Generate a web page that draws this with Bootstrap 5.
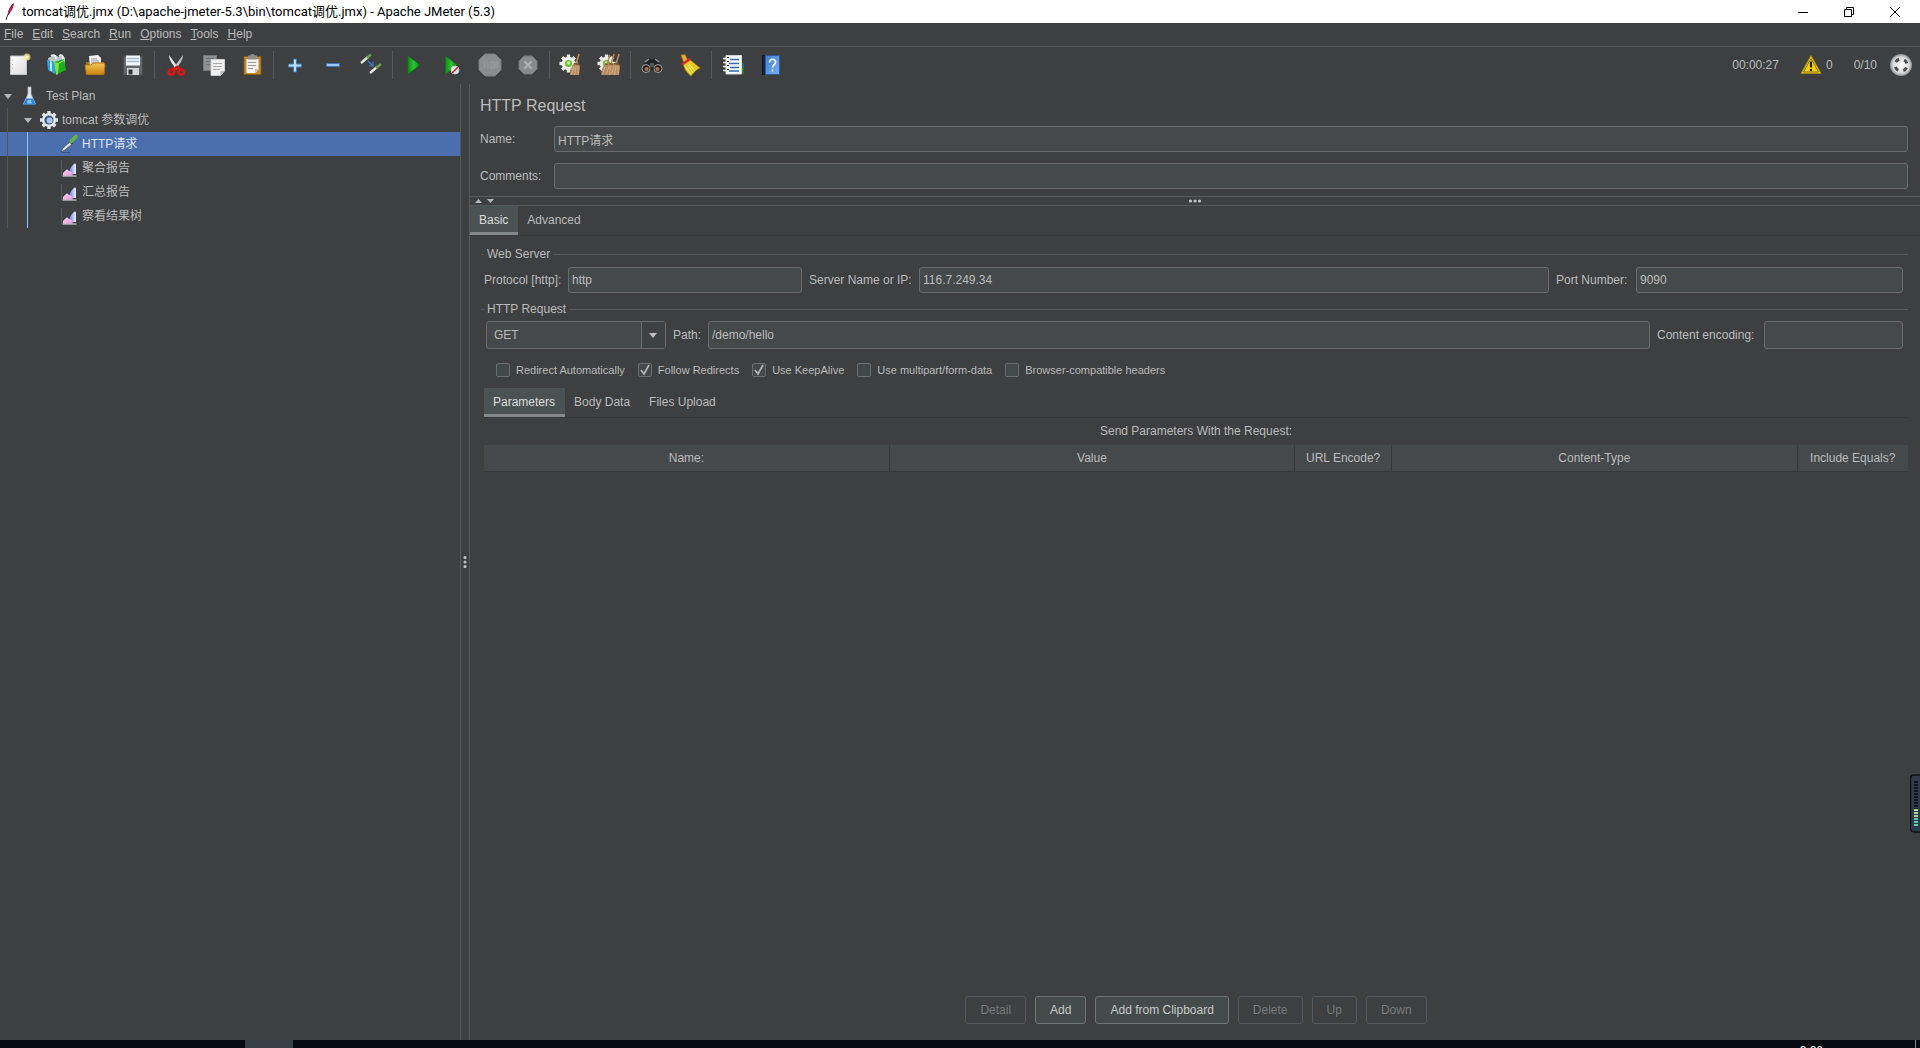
<!DOCTYPE html>
<html lang="en">
<head>
<meta charset="utf-8">
<meta name="viewport" content="width=device-width, initial-scale=1">
<title>Apache JMeter (5.3)</title>
<link href="https://cdn.jsdelivr.net/npm/bootstrap@5.3.0/dist/css/bootstrap.min.css" rel="stylesheet">
<style>
  :root { --jm-bg:#3d3f41; --jm-line:#56595a; --jm-edge:#696c6d; --jm-field:#45494a; --jm-text:#bbbbbb; }
  body { font-family:"Liberation Sans","Noto Sans CJK SC",sans-serif; font-size:12px; line-height:16px; color:var(--jm-text); background:var(--jm-bg); }
  .shell { height:100vh; overflow:hidden; }
  .titlebar { height:23px; background:#fff; color:#000; font-family:Roboto,"Noto Sans CJK SC",sans-serif; font-size:13px; padding:0 2px 0 4px; }
  .titlebar button { width:46px; height:23px; border:0; background:none; padding:0; display:flex; align-items:center; justify-content:center; }
  .menubar { height:24px; border-bottom:1px solid var(--jm-line); padding:0 0 2px 4px; gap:9px; }
  .menubar a { color:var(--jm-text); text-decoration:none; }
  .toolbar { height:37px; padding-bottom:2px; }
  .toolbar button { width:38px; height:35px; border:0; background:none; padding:0; display:flex; align-items:center; justify-content:center; }
  .sep { width:1px; height:28px; background:#55585a; margin:0 2px; }
  .status { padding-right:7px; }
  .elapsed { margin-right:20px; } .warn { margin-right:3px; } .warn-count { margin-right:21px; } .threads { margin-right:12px; }
  .work { min-height:0; }
  .tree { width:461px; border-right:1px solid var(--jm-line); }
  .tree-row { height:24px; display:flex; align-items:center; }
  .tree-row svg { flex:none; }
  .lvl-1 { padding-left:4px; } .lvl-2 { padding-left:24px; } .lvl-3 { padding-left:60px; gap:4px; }
  .tree-row.picked { background:#4b6eaf; color:#dfe6f2; }
  .guide { position:absolute; width:1px; bottom:0; background:#54575a; }
  .guide-a { left:7px; top:24px; } .guide-b { left:27px; top:48px; background:#8ec4f8; }
  .grip { width:8px; }
  .main { border-left:1px solid var(--jm-line); min-width:0; }
  .head { padding:12px 12px 7px 10px; }
  .head h1 { font-size:16px; line-height:20px; margin:0 0 10px; font-weight:400; }
  .head label { width:74px; }
  .head-rows { gap:11px; }
  .field { height:26px; background:var(--jm-field); border:1px solid var(--jm-edge); border-radius:3px; color:var(--jm-text); padding:0 3px; min-width:0; font:inherit; outline:0; }
  .tall { height:28px; }
  .splitbar { height:10px; border:1px solid var(--jm-line); border-width:1px 0; display:grid; grid-template-columns:1fr auto 1fr; align-items:center; }
  .arrows { margin-left:5px; }
  .tabs { border-bottom:1px solid #353738; }
  .tabs button { height:29px; border:0; border-bottom:3px solid transparent; background:none; color:var(--jm-text); padding:2px 10px 0 9px; }
  .tabs button.active { background:#4b5253; border-bottom-color:#84888a; color:#dcdcdc; }
  .group-title { display:flex; align-items:center; gap:3px; line-height:16px; }
  .group-title::before { content:""; width:3px; height:1px; background:var(--jm-line); }
  .group-title::after { content:""; flex:1; height:1px; background:var(--jm-line); }
  .body-area { padding:10px 12px 16px 11px; }
  .server-row { padding:5px 5px 8px 3px; }
  .path-row { padding:4px 5px 0 5px; }
  .w-pr { width:84px; } .f-pr { width:234px; margin-right:7px; }
  .w-sv { width:110px; } .w-pt { width:80px; margin-left:7px; } .f-pt { width:267px; }
  .w-pa { width:35px; margin-left:7px; } .w-ce { width:107px; margin-left:7px; } .f-ce { width:139px; }
  .method-box { position:relative; width:180px; }
  .method-box select { width:100%; appearance:none; padding-left:7px; display:block; }
  .method-box svg { position:absolute; right:1px; top:1px; pointer-events:none; }
  .checks { height:39px; padding:3px 0 0 15px; font-size:11px; gap:13px; }
  .checks label { display:flex; align-items:center; gap:6px; }
  .checks input { appearance:none; margin:0; width:14px; height:14px; border:1px solid #6b6e6f; border-radius:2px; background:#43494a; }
  .checks input:checked { background:#43494a url("data:image/svg+xml,%3Csvg xmlns='http://www.w3.org/2000/svg' viewBox='0 0 12 12'%3E%3Cpath d='M2 6l3 4 5-9' fill='none' stroke='%23b4b6b6' stroke-width='1.7'/%3E%3C/svg%3E"); }
  .inner { margin-left:3px; }
  .caption-line { padding:5px 0 6px; }
  .params { width:100%; table-layout:fixed; }
  .params th { height:26px; font-weight:400; text-align:center; background:#46494b; border-right:1px solid #353839; border-bottom:1px solid #36393a; padding:0; }
  .params th:last-child { border-right:0; }
  .c-url { width:97px; } .c-eq { width:111px; }
  .actions { gap:9px; }
  .actions .btn { --bs-btn-font-size:12px; --bs-btn-line-height:16px; --bs-btn-padding-y:5px; --bs-btn-padding-x:14px; --bs-btn-border-radius:3px; --bs-btn-color:#c8c8c8; --bs-btn-bg:#454b4b; --bs-btn-border-color:#707474; --bs-btn-disabled-color:#77797a; --bs-btn-disabled-bg:transparent; --bs-btn-disabled-border-color:#55585a; --bs-btn-disabled-opacity:1; }
  .taskbar { height:8px; background:#060a10; position:relative; overflow:hidden; padding:0 4px 0 245px; }
  .task { width:48px; height:8px; background:#394045; }
  .desk-edge { width:1px; height:8px; background:#85888b; }
  .clock { position:absolute; right:97px; top:3px; color:#fff; }
  .meter { position:absolute; right:0; top:774px; }
</style>
<script src="https://cdn.jsdelivr.net/npm/bootstrap@5.3.0/dist/js/bootstrap.bundle.min.js"></script>
</head>
<body>
<svg width="0" height="0" class="position-absolute" aria-hidden="true">
  <defs>
    <linearGradient id="gGreen" x2="1" y2="0"><stop stop-color="#0a8f14"/><stop offset=".5" stop-color="#2fc436"/><stop offset="1" stop-color="#0b8a12"/></linearGradient>
    <linearGradient id="gGold" x2="0" y2="1"><stop stop-color="#f3c65a"/><stop offset="1" stop-color="#c98609"/></linearGradient>
    <linearGradient id="gPaper" x2="1" y2="1"><stop stop-color="#fff"/><stop offset="1" stop-color="#dcdcdc"/></linearGradient>
    <linearGradient id="gBook" x2="1" y2="1"><stop stop-color="#3f7fd0"/><stop offset="1" stop-color="#78b0f0"/></linearGradient>
    <linearGradient id="gPink" x2="1" y2="1"><stop stop-color="#ffd9f6"/><stop offset="1" stop-color="#ee8fdc"/></linearGradient>
    <linearGradient id="gBlue" x2="1" y2="0"><stop stop-color="#7583e2"/><stop offset="1" stop-color="#eef3ff"/></linearGradient>
    <radialGradient id="gBall"><stop stop-color="#fff"/><stop offset=".75" stop-color="#d8d8d8"/><stop offset="1" stop-color="#8c8c8c"/></radialGradient>
    <symbol id="report" viewBox="0 0 18 20">
      <path d="M1.500 2v16" stroke="#5b5d60"/>
      <path d="M9.500 13c1-3 2.500-6 5-7.500 1 0 1.500.5 1.500 2V16h-5z" fill="url(#gBlue)"/>
      <path d="M3 17.500V15l3.500-3.500c1-.5 2 1 3 1.500 1.500.5 2.500 1.500 3.500 4.500z" fill="url(#gPink)"/>
      <path d="M2.500 18h14" stroke="#f2f2f6"/>
    </symbol>
    <symbol id="gearwheel" viewBox="0 0 24 24">
      <g transform="translate(9.500 10.500)"><path d="M0-9V9M-9 0H9M-6.300-6.300L6.300 6.300M6.300-6.300L-6.300 6.300" stroke="#e8ebe4" stroke-width="3.400"/><circle r="6.800" fill="#eef0ea"/><circle r="3.600" fill="#6fba35"/><circle r="1.800" cy="-.5" fill="#c6efa8"/></g>
    </symbol>
    <symbol id="broomhead" viewBox="0 0 12 24">
      <path d="M10 1L7 11" stroke="#b98a58" stroke-width="1.600"/><path d="M5 10l5 1 1 3-1 8H1c0-4 1.500-9 4-12z" fill="#b48a60"/><path d="M5 13l-2.500 8M7 13l-1.500 9M9 13v8" stroke="#dcbc92" stroke-width=".8"/><path d="M5 10.500l5 1" stroke="#7d5630" stroke-width="1.500"/>
    </symbol>
  </defs>
</svg>

<div class="shell d-flex flex-column">
  <header class="titlebar d-flex align-items-center flex-shrink-0">
    <svg width="14" height="20" viewBox="0 0 14 20"><path d="M10 1C6 4 4 9 3.500 14L6 11C8 8 10 5 10 1z" fill="#c22036"/><path d="M9 2C6.500 5 5 8 4 13" stroke="#7a1c60" fill="none"/><path d="M3.600 13L2 18" stroke="#333"/></svg>
    <span class="ms-1 flex-grow-1">tomcat调优.jmx (D:\apache-jmeter-5.3\bin\tomcat调优.jmx) - Apache JMeter (5.3)</span>
    <button aria-label="Minimize"><svg width="12" height="12"><path d="M1 6.500h10" stroke="#000"/></svg></button>
    <button aria-label="Restore"><svg width="12" height="12" fill="none" stroke="#000"><path d="M1.500 3.500h7v7h-7zM3.500 3V1.500h7v7H9"/></svg></button>
    <button aria-label="Close"><svg width="12" height="12"><path d="M1 1l10 10M11 1L1 11" stroke="#000"/></svg></button>
  </header>

  <nav class="menubar d-flex align-items-center flex-shrink-0">
    <a href="#"><u>F</u>ile</a><a href="#"><u>E</u>dit</a><a href="#"><u>S</u>earch</a><a href="#"><u>R</u>un</a><a href="#"><u>O</u>ptions</a><a href="#"><u>T</u>ools</a><a href="#"><u>H</u>elp</a>
  </nav>

  <div class="toolbar d-flex align-items-center flex-shrink-0">
    <button aria-label="New"><svg width="24" height="24"><path d="M3.500 3h16v18.500h-16z" fill="url(#gPaper)" stroke="#c4c4c4"/><path d="M5.500 7v1m0 3v1m0 3v1" stroke="#bbb"/><circle cx="20" cy="4" r="3.500" fill="#f4ee8b" opacity=".75"/><circle cx="20" cy="4" r="1.700" fill="#fffbc8"/></svg></button>
    <button aria-label="Templates"><svg width="24" height="24"><path d="M3 5l7-3 4 2 3-2 3 3v6H4z" fill="#b9c3c9"/><path d="M6 3c3-2 5 0 5 3M14 3c3-2 5 1 4 4" fill="none" stroke="#eef3f6" stroke-width="2"/><path d="M2 7l8 2v12l-7-4z" fill="#2ba3e0"/><path d="M5 8l2 .500v10l-2-1z" fill="#bfe8fb"/><path d="M9 9l10-3 2 11-10 5z" fill="#1fae1b"/><path d="M9 9l5 1-1 11-2 1z" fill="#7fe052"/><path d="M14 10l6-3" stroke="#baf59c"/></svg></button>
    <button aria-label="Open"><svg width="24" height="24"><path d="M3 9h18v12H3z" fill="#a86f0c"/><path d="M6 3l9-1 3 3v10H7z" fill="#f5f5f5"/><path d="M8 6h6M8 8h8M8 10h8" stroke="#999"/><path d="M2 12h6l2-2h11l1 2-1 9.500H3.500z" fill="url(#gGold)" stroke="#b47a10"/></svg></button>
    <button aria-label="Save"><svg width="24" height="24"><path d="M2.500 3h18l1 1v18h-19z" fill="#63676a" stroke="#4a4d4f"/><path d="M5 2.500h14v10H5z" fill="#f4f8fb"/><path d="M6 5.500h12M6 8.500h12" stroke="#a3bdd0" stroke-width="1.500"/><path d="M6 15h12v7H6z" fill="#d5d5d5"/><path d="M7.500 16.500h4v5h-4z" fill="#33373a"/></svg></button>
    <span class="sep"></span>
    <button aria-label="Cut"><svg width="24" height="24"><path d="M5 2l9.500 13-2 1.500C9 12 5 7 5 2z" fill="#e9ebeb"/><path d="M19 2l-9.500 13 2 1.500C15 12 19 7 19 2z" fill="#c5c9ca"/><g fill="none" stroke="#dc1515" stroke-width="2.600"><ellipse cx="7.500" cy="19" rx="3" ry="2.500" transform="rotate(-30 7.500 19)"/><ellipse cx="17" cy="19" rx="3" ry="2.500" transform="rotate(30 17 19)"/><path d="M9 17l4-3 3 3"/></g></svg></button>
    <button aria-label="Copy"><svg width="24" height="24"><path d="M1.500 2.500h13v15h-13z" fill="#8f9192" stroke="#777"/><path d="M4 5.500h8M4 8.500h6M4 11.500h5" stroke="#686a6b"/><path d="M9 6.500h13.500V18l-4 4.500H9z" fill="#efefef" stroke="#cfcfcf"/><path d="M11 10.500h9M11 13.500h9M11 16.500h7" stroke="#aaa"/><path d="M18.500 22.500V18h4z" fill="#b8b8b8"/></svg></button>
    <button aria-label="Paste"><svg width="24" height="24"><path d="M4 3.500h17v18H4z" fill="#c08a30" stroke="#8a5c12"/><path d="M6.500 6h12v10.500l-3 3.500h-9z" fill="#f5f3ec"/><path d="M8 2.500h2c1-2 4-2 5 0h2v4H8z" fill="#8d8f8c"/><path d="M8 9.500h8M8 12.500h8M8 15.500h5" stroke="#999"/><path d="M15 20v-4h4z" fill="#c9c5b8"/></svg></button>
    <span class="sep"></span>
    <button aria-label="Expand"><svg width="24" height="24"><path d="M10.500 6h3v5h5v3h-5v5h-3v-5h-5v-3h5z" fill="#b8d9f8" stroke="#3b78bd"/></svg></button>
    <button aria-label="Collapse"><svg width="24" height="24"><path d="M5.500 10.500h13v3h-13z" fill="#9cc6f0" stroke="#3b78bd"/></svg></button>
    <button aria-label="Toggle"><svg width="24" height="24"><path d="M2 10l7-6M11 20l7-6" stroke="#e4e6e2" stroke-width="2.400"/><path d="M8 5l4-3.500M17 15l5-4" stroke="#6aa04f" stroke-width="2.400"/><path d="M9 8l4 4m1-3v4h-4" fill="none" stroke="#3b7fd6" stroke-width="1.200"/></svg></button>
    <span class="sep"></span>
    <button aria-label="Start"><svg width="24" height="24"><path d="M6 3l12 9-12 9z" fill="url(#gGreen)" stroke="#0a7a12" stroke-width=".6"/></svg></button>
    <button aria-label="Start no pauses"><svg width="24" height="24"><path d="M5.500 3L17 12 5.500 21z" fill="url(#gGreen)" stroke="#0a7a12" stroke-width=".6"/><circle cx="15" cy="17" r="4" fill="#f2f2f2" stroke="#b9c6d2"/><path d="M12 20l6-6" stroke="#e02424" stroke-width="1.700"/></svg></button>
    <button aria-label="Stop"><svg width="24" height="24"><path d="M7 1h10l6 6v10l-6 6H7l-6-6V7z" fill="#8b8d8e" stroke="#7a7c7d"/><path d="M5 9h3M6.500 9v6M10 9v6M13 9h3v6h-3zM18 9v6m0-6h2v3h-2" stroke="#999b9c" fill="none"/></svg></button>
    <button aria-label="Shutdown"><svg width="24" height="24"><path d="M8 3h8l5 5v8l-5 5H8l-5-5V8z" fill="#898b8c" stroke="#777"/><path d="M8.500 8.500l7 7m0-7l-7 7" stroke="#b0b2b3" stroke-width="2"/></svg></button>
    <span class="sep"></span>
    <button aria-label="Clear"><svg width="24" height="24"><use href="#gearwheel" width="24" height="24"/><use href="#broomhead" x="10" width="12" height="24"/></svg></button>
    <button aria-label="Clear all"><svg width="24" height="24"><use href="#gearwheel" width="24" height="24"/><use href="#broomhead" x="3" y="1" width="12" height="23"/><use href="#broomhead" x="7" width="12" height="24"/><use href="#broomhead" x="12" width="12" height="24"/></svg></button>
    <span class="sep"></span>
    <button aria-label="Search"><svg width="24" height="24"><path d="M5 9l4-4 3 2 3-2 4 4 3 8H2z" fill="#202224"/><path d="M5 9l4-3M19 9l-4-3" stroke="#909396" stroke-width="1.500"/><circle cx="6" cy="15.500" r="4" fill="#2a2320" stroke="#a0a3a5"/><circle cx="18" cy="15.500" r="4" fill="#2a2320" stroke="#a0a3a5"/><circle cx="6.500" cy="16" r="2" fill="#a8704a"/><circle cx="17.500" cy="16" r="2" fill="#a8704a"/><path d="M10 10h4v4h-4z" fill="#55585a"/></svg></button>
    <button aria-label="Reset search"><svg width="24" height="24"><path d="M3 2l4-.5 3 6-4 3z" fill="#eda634" stroke="#a46b13" stroke-width=".7"/><path d="M5 10l6-4 11 9c-4 2-6 4-9 8C8 19 6 15 5 10z" fill="#e9c824" stroke="#a88a0e" stroke-width=".7"/><path d="M7 13l6 8M11 11l6 7M10 12l5 8" stroke="#fff27a"/><path d="M4 11.500L12 6" stroke="#d32a1f" stroke-width="2.500"/></svg></button>
    <span class="sep"></span>
    <button aria-label="Function helper"><svg width="24" height="24"><path d="M18 10h4.500v11H18z" fill="#2e8f3a"/><path d="M19 10h3.500v4H19z" fill="#2a62ba"/><path d="M5 2.500h15.500V21H5z" fill="#fdfdfd" stroke="#d5d5d5"/><path d="M9 6.500h9M8 10.500h10M9 14.500h9M8 18h10" stroke="#2e69b5" stroke-width="1.400"/><path d="M2 5.500h5M2 9.500h5M2 13.500h5M2 17.500h5" stroke="#fff" stroke-width="1.600"/><path d="M6 4.500h2M6 8.500h2M6 12.500h2M6 16.500h2" stroke="#222"/></svg></button>
    <button aria-label="Help"><svg width="24" height="24"><path d="M3.500 2.500h4v19h-4z" fill="#17253d" stroke="#0e1727"/><path d="M6.500 2.500h14v19h-14z" fill="url(#gBook)" stroke="#2c5a9a"/><path d="M10.500 9.500c0-4.500 6.500-4 6 0-.4 2.500-3 2.200-3 5M13.500 16.500v2" fill="none" stroke="#fff" stroke-width="1.600"/></svg></button>
    <div class="status d-flex align-items-center ms-auto">
      <span class="elapsed">00:00:27</span>
      <svg class="warn" width="24" height="24"><path d="M12 2.500L22 20.500H2z" fill="#f6cf12" stroke="#a98b0a" stroke-linejoin="round"/><path d="M12 5.500L19.500 19h-15z" fill="none" stroke="#5b4c05" stroke-width=".7"/><path d="M12 8.500v6" stroke="#222" stroke-width="2.200"/><circle cx="12" cy="17" r="1.200" fill="#222"/></svg>
      <span class="warn-count">0</span>
      <span class="threads">0/10</span>
      <svg width="24" height="24"><circle cx="12" cy="12" r="11" fill="url(#gBall)"/><circle cx="12" cy="12" r="6" fill="none" stroke="#4c4e50" stroke-width="3" stroke-dasharray="4.200 5.225" stroke-dashoffset="-2.600"/></svg>
    </div>
  </div>

  <div class="work d-flex flex-grow-1">
    <aside class="tree flex-shrink-0">
      <div class="position-relative">
        <div class="tree-row lvl-1">
          <svg width="8" height="5"><path d="M0 0h8L4 5z" fill="#b4b6b7"/></svg>
          <svg class="ms-2" width="18" height="20"><path d="M8 1v7L3.500 18h12L11 8V1z" fill="#dfe9f2" stroke="#aeb7bd" stroke-width=".8"/><path d="M6 12.500h7l2.500 6h-12z" fill="#2f86e0"/><path d="M8 14l-1 3.500h5L11 14z" fill="#8cc4f8"/></svg>
          <span class="ms-1 ps-1">Test Plan</span>
        </div>
        <div class="tree-row lvl-2">
          <svg width="8" height="5"><path d="M0 0h8L4 5z" fill="#b4b6b7"/></svg>
          <svg class="ms-2" width="18" height="20" viewBox="0 0 18 20"><g transform="translate(9 10)"><path d="M0-9V9M-9 0H9M-6.300-6.300L6.300 6.300M6.300-6.300L-6.300 6.300" stroke="#e4e6e8" stroke-width="3.400"/><circle r="7" fill="#e4e6e8"/><circle r="4.600" fill="#3a5c88"/><circle r="3" cx=".6" cy=".6" fill="#a9c8e6"/></g></svg>
          <span class="ms-1">tomcat 参数调优</span>
        </div>
        <div class="tree-row lvl-3 picked"><svg width="18" height="20"><path d="M1 18l2-4 7-6 2 2-7 6z" fill="#e5e8e4" stroke="#4a4f48" stroke-width=".7"/><path d="M9.500 7l3 3" stroke="#28451e" stroke-width="2"/><path d="M11 7.500L16 2.500" stroke="#69b13f" stroke-width="3.600" stroke-linecap="round"/><path d="M2 18.500h9" stroke="#39558a"/></svg>HTTP请求</div>
        <div class="tree-row lvl-3"><svg width="18" height="20"><use href="#report"/></svg>聚合报告</div>
        <div class="tree-row lvl-3"><svg width="18" height="20"><use href="#report"/></svg>汇总报告</div>
        <div class="tree-row lvl-3"><svg width="18" height="20"><use href="#report"/></svg>察看结果树</div>
        <span class="guide guide-a"></span><span class="guide guide-b"></span>
      </div>
    </aside>
    <div class="grip d-flex align-items-center justify-content-center flex-shrink-0"><svg width="4" height="14" fill="#c4c4c4"><circle cx="2" cy="2.500" r="1.500"/><circle cx="2" cy="7" r="1.500"/><circle cx="2" cy="11.500" r="1.500"/></svg></div>

    <main class="main d-flex flex-column flex-grow-1">
      <section class="head">
        <h1>HTTP Request</h1>
        <div class="head-rows d-flex flex-column">
          <div class="d-flex align-items-center"><label for="nm">Name:</label><input id="nm" class="field flex-grow-1" value="HTTP请求"></div>
          <div class="d-flex align-items-center"><label for="cm">Comments:</label><input id="cm" class="field flex-grow-1"></div>
        </div>
      </section>
      <div class="splitbar flex-shrink-0">
        <svg class="arrows" width="20" height="6" fill="#b4b6b7"><path d="M0 5h7L3.500 1zM12 1h7l-3.500 4z"/></svg>
        <svg width="14" height="4" fill="#c4c4c4"><circle cx="2.500" cy="2" r="1.600"/><circle cx="7" cy="2" r="1.600"/><circle cx="11.500" cy="2" r="1.600"/></svg>
      </div>
      <div class="tabs d-flex flex-shrink-0"><button class="active">Basic</button><button>Advanced</button></div>

      <div class="body-area d-flex flex-column flex-grow-1">
        <div class="group-title">Web Server</div>
        <div class="server-row d-flex align-items-center">
          <label for="pr" class="w-pr">Protocol [http]:</label><input id="pr" class="field f-pr" value="http">
          <label for="sv" class="w-sv">Server Name or IP:</label><input id="sv" class="field flex-grow-1" value="116.7.249.34">
          <label for="pt" class="w-pt">Port Number:</label><input id="pt" class="field f-pt" value="9090">
        </div>
        <div class="group-title">HTTP Request</div>
        <div class="path-row d-flex align-items-center">
          <div class="method-box"><select class="field tall" aria-label="Method"><option>GET</option></select>
            <svg width="24" height="26"><path d="M0 0h24v26H0z" fill="#3d4143"/><path d="M.5 0v26" stroke="#696c6d"/><path d="M8 11h8l-4 5z" fill="#c0c2c3"/></svg></div>
          <label for="pa" class="w-pa">Path:</label><input id="pa" class="field tall flex-grow-1" value="/demo/hello">
          <label for="ce" class="w-ce">Content encoding:</label><input id="ce" class="field tall f-ce">
        </div>
        <div class="checks d-flex align-items-center">
          <label><input type="checkbox">Redirect Automatically</label>
          <label><input type="checkbox" checked>Follow Redirects</label>
          <label><input type="checkbox" checked>Use KeepAlive</label>
          <label><input type="checkbox">Use multipart/form-data</label>
          <label><input type="checkbox">Browser-compatible headers</label>
        </div>
        <div class="inner d-flex flex-column flex-grow-1">
          <div class="tabs d-flex"><button class="active">Parameters</button><button>Body Data</button><button>Files Upload</button></div>
          <div class="text-center caption-line">Send Parameters With the Request:</div>
          <table class="params">
            <thead><tr><th>Name:</th><th>Value</th><th class="c-url">URL Encode?</th><th>Content-Type</th><th class="c-eq">Include Equals?</th></tr></thead>
          </table>
          <div class="actions d-flex justify-content-center mt-auto">
            <button class="btn" disabled>Detail</button><button class="btn">Add</button><button class="btn">Add from Clipboard</button><button class="btn" disabled>Delete</button><button class="btn" disabled>Up</button><button class="btn" disabled>Down</button>
          </div>
        </div>
      </div>
    </main>
  </div>

  <footer class="taskbar d-flex justify-content-between flex-shrink-0"><div class="task"></div><span class="clock">9:26</span><span class="desk-edge"></span></footer>
</div>

<svg class="meter" width="10" height="59"><path d="M12 1H4Q.5 1 .5 4v51q0 3 3.500 3h8z" fill="#303a4c" stroke="#0e1014" stroke-width="1.500"/><path d="M6 7v28" stroke="#11161f" stroke-width="4" stroke-dasharray="2 1"/><path d="M6 35v9" stroke="#a3dc8f" stroke-width="4" stroke-dasharray="2 1"/><path d="M6 44v9" stroke="#56cfae" stroke-width="4" stroke-dasharray="2 1"/></svg>
</body>
</html>
